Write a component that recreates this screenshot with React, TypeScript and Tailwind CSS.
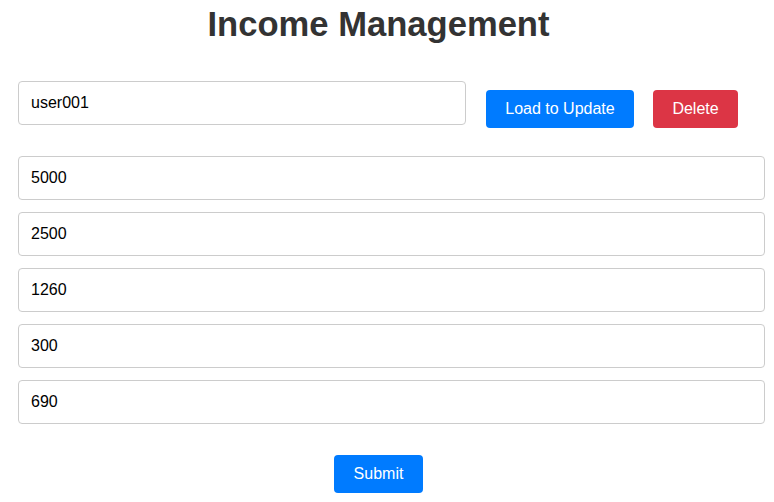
import { useState } from 'react';

const inputCls =
    'h-[44px] px-[12px] border border-[#ccc] rounded-[4px] text-[16px] text-black outline-none bg-white shrink-0';
const btnCls =
    'shrink-0 whitespace-nowrap py-[10px] leading-[18px] text-[16px] text-white rounded-[4px]';

export default function App() {
    const [userId, setUserId] = useState('user001');
    const [values, setValues] = useState(['5000', '2500', '1260', '300', '690']);

    return (
        <div className="w-[757px] px-[18px] font-['Liberation_Sans',Arial,sans-serif] bg-white min-h-[502px]">
            <h1 className="pt-[4px] text-center text-[34.6px] leading-[40px] font-bold text-[#333]">
                Income Management
            </h1>

            <div className="mt-[37px] flex items-start">
                <input
                    className={`${inputCls} w-[448px]`}
                    value={userId}
                    onChange={(e) => setUserId(e.target.value)}
                />
                <button className={`${btnCls} w-[148px] ml-[20px] mt-[9px] bg-[#007bff]`}>
                    Load to Update
                </button>
                <button className={`${btnCls} w-[85px] ml-[19px] mt-[9px] bg-[#dc3545]`}>
                    Delete
                </button>
            </div>

            <div className="mt-[28px] flex flex-col gap-[12px] w-[747px]">
                {values.map((v, i) => (
                    <input
                        key={i}
                        className={`${inputCls} w-full`}
                        value={v}
                        onChange={(e) =>
                            setValues(values.map((x, j) => (j === i ? e.target.value : x)))
                        }
                    />
                ))}
            </div>

            <div className="mt-[31px] text-center">
                <button className={`${btnCls} px-[20px] bg-[#007bff]`}>Submit</button>
            </div>
        </div>
    );
}
